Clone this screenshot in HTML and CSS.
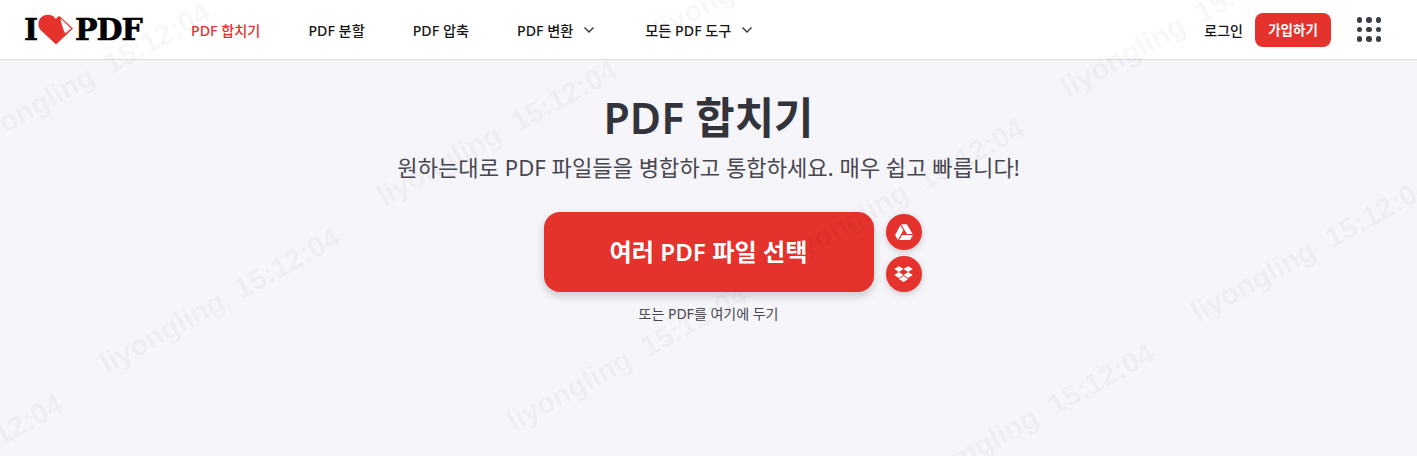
FILE: index.html
```html
<!DOCTYPE html>
<html lang="ko">
<head>
  <meta charset="UTF-8">
  <title>PDF 합치기</title>
  <link rel="stylesheet" href="styles.css">
</head>
<body>
  <header class="header">
    <a class="logo" href="#">
      <span>I</span>
      <svg class="logo-heart" viewBox="0 0 35 31" width="35" height="31">
        <path fill="#e5322d" d="M18 30.5 L2.5 16 C-1 11.5 0 4.5 5 2 C10 -0.5 15 1 18 5 C19 3.5 20 2.5 21.5 2 L35 14.5 Z"/>
        <path fill="#fff" stroke="#e5322d" stroke-width="0.8" d="M22 3.5 L33.5 14.5 L27 20 C24.5 15 22.5 9 22 3.5 Z"/>
      </svg>
      <span>PDF</span>
    </a>
    <nav class="nav">
      <a class="nav-item active" href="#">PDF 합치기</a>
      <a class="nav-item" href="#">PDF 분할</a>
      <a class="nav-item" href="#">PDF 압축</a>
      <a class="nav-item" href="#">PDF 변환 <svg class="chevron" viewBox="0 0 12 8" width="12" height="8"><path d="M1.5 1.5 L6 6 L10.5 1.5"/></svg></a>
      <a class="nav-item" href="#">모든 PDF 도구 <svg class="chevron" viewBox="0 0 12 8" width="12" height="8"><path d="M1.5 1.5 L6 6 L10.5 1.5"/></svg></a>
    </nav>
    <div class="header-right">
      <a class="login" href="#">로그인</a>
      <a class="signup" href="#">가입하기</a>
      <div class="apps">
        <i></i><i></i><i></i><i></i><i></i><i></i><i></i><i></i><i></i>
      </div>
    </div>
  </header>

  <main class="main">
    <h1 class="title">PDF 합치기</h1>
    <p class="subtitle">원하는대로 PDF 파일들을 병합하고 통합하세요. 매우 쉽고 빠릅니다!</p>
    <div class="upload-row">
      <a class="upload-btn" href="#">여러 PDF 파일 선택</a>
      <div class="cloud">
        <a class="cloud-btn" href="#">
          <svg viewBox="0 0 512 512" width="18" height="18"><path d="M339 314.9L175.4 32h161.2l163.6 282.9H339zm-137.5 23.6L120.9 480h310.5L512 338.5H201.5zM154.1 67.4L0 338.5 80.6 480 237 208.8 154.1 67.4z"/></svg>
        </a>
        <a class="cloud-btn" href="#">
          <svg viewBox="0 0 528 512" width="19" height="18"><path d="M264.4 116.3l-132 84.3 132 84.3-132 84.3L0 284.1l132.3-84.3L0 116.3 132.3 32l132.1 84.3zM131.6 395.7l132-84.3 132 84.3-132 84.3-132-84.3zm132.8-111.6l132-84.3-132-83.6L395.7 32 528 116.3l-132.3 84.3L528 284.8l-132.3 84.3-131.3-85z"/></svg>
        </a>
      </div>
    </div>
    <p class="drop-hint">또는 PDF를 여기에 두기</p>
  </main>

  <!-- watermark sits over the whole page -->
  <svg class="watermark" width="1417" height="456">
    <g class="wm-text">
      <text transform="translate(-153 -76) rotate(-29)">liyongling&#160;&#160;15:12:04</text>
      <text transform="translate(254 -18) rotate(-29)">liyongling&#160;&#160;15:12:04</text>
      <text transform="translate(661 40) rotate(-29)">liyongling&#160;&#160;15:12:04</text>
      <text transform="translate(1068 98) rotate(-29)">liyongling&#160;&#160;15:12:04</text>
      <text transform="translate(-23 149) rotate(-29)">liyongling&#160;&#160;15:12:04</text>
      <text transform="translate(384 207) rotate(-29)">liyongling&#160;&#160;15:12:04</text>
      <text transform="translate(791 265) rotate(-29)">liyongling&#160;&#160;15:12:04</text>
      <text transform="translate(1198 323) rotate(-29)">liyongling&#160;&#160;15:12:04</text>
      <text transform="translate(107 374) rotate(-29)">liyongling&#160;&#160;15:12:04</text>
      <text transform="translate(514 432) rotate(-29)">liyongling&#160;&#160;15:12:04</text>
      <text transform="translate(921 490) rotate(-29)">liyongling&#160;&#160;15:12:04</text>
      <text transform="translate(-170 541) rotate(-29)">liyongling&#160;&#160;15:12:04</text>
    </g>
  </svg>
</body>
</html>
```

FILE: styles.css
```css
* {
  box-sizing: border-box;
}
html, body {
  height: 100%;
}
body {
  margin: 0;
  background: #f5f5fa;
  color: #33333b;
  font-family: "Noto Sans", "Noto Sans CJK KR", sans-serif;
  overflow: hidden;
}
a {
  color: inherit;
  text-decoration: none;
}
.header {
  display: flex;
  align-items: center;
  height: 60px;
  padding: 0 36px 0 24px;
  background: #fff;
  border-bottom: 1px solid #d9d9e0;
}
.logo {
  display: flex;
  align-items: center;
  width: 167px;
  color: #000;
  font-family: "DejaVu Serif", serif;
  font-size: 30px;
  font-weight: 700;
  line-height: 1;
  letter-spacing: -1px;
  -webkit-text-stroke: 0.6px #000;
}
.logo-heart {
  margin: 0 2px 0 1px;
}
.nav {
  display: flex;
  gap: 48px;
}
.nav-item {
  display: flex;
  align-items: center;
  gap: 4px;
  font-size: 14.2px;
  font-weight: 500;
  color: #161616;
}
.nav-item.active {
  color: #e5322d;
}
.chevron {
  margin: 0 2px 0 6px;
  fill: none;
  stroke: #33333b;
  stroke-width: 1.4;
}
.header-right {
  display: flex;
  align-items: center;
  margin-left: auto;
}
.login {
  margin-right: 12px;
  font-size: 14px;
  font-weight: 500;
  color: #161616;
}
.signup {
  width: 76px;
  height: 34px;
  border-radius: 8px;
  background: #e5322d;
  color: #fff;
  font-size: 13.5px;
  font-weight: 700;
  line-height: 34px;
  text-align: center;
}
.apps {
  display: grid;
  grid-template-columns: repeat(3, 5.5px);
  gap: 4px;
  margin-left: 25.5px;
}
.apps i {
  width: 5.5px;
  height: 5.5px;
  border-radius: 50%;
  background: #383e45;
}
.main {
  display: flex;
  flex-direction: column;
  align-items: center;
  padding-top: 29px;
}
.title {
  margin: 0;
  font-size: 42.8px;
  font-weight: 600;
  line-height: 58px;
  color: #33333b;
}
.subtitle {
  margin: 5px 0 0;
  font-size: 22.14px;
  font-weight: 400;
  line-height: 30px;
  color: #47474f;
}
.upload-row {
  display: grid;
  grid-template-columns: 1fr 330px 1fr;
  column-gap: 12px;
  align-items: end;
  width: 100%;
  margin-top: 30px;
}
.upload-btn {
  grid-column: 2;
  height: 80px;
  border-radius: 16px;
  background: #e5322d;
  box-shadow: 0 4px 8px rgba(72, 72, 72, 0.25);
  color: #fff;
  font-size: 24.2px;
  font-weight: 600;
  line-height: 80px;
  text-align: center;
}
.cloud {
  display: flex;
  flex-direction: column;
  gap: 6px;
  width: 36px;
}
.cloud-btn {
  display: flex;
  align-items: center;
  justify-content: center;
  width: 36px;
  height: 36px;
  border-radius: 50%;
  background: #e5322d;
  box-shadow: 0 2px 6px rgba(72, 72, 72, 0.25);
}
.cloud-btn svg {
  fill: #fff;
}
.drop-hint {
  margin: 12px 0 0;
  font-size: 14px;
  line-height: 20px;
  color: #47474f;
}
.watermark {
  position: absolute;
  top: 0;
  left: 0;
  pointer-events: none;
}
.wm-text {
  fill: rgba(0, 0, 0, 0.04);
  font-family: "Liberation Sans", sans-serif;
  font-size: 29px;
  font-weight: 700;
}
```
